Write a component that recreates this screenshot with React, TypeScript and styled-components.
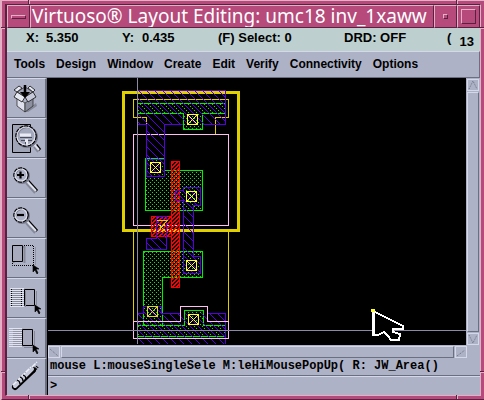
import React from "react";
import styled, { createGlobalStyle } from "styled-components";

const c = {
  pink: "#b54a7b",
  pinkLight: "#e3b0c6",
  pinkDark: "#5a2040",
  panel: "#aeb2c6",
  light: "#d4d8e8",
  dark: "#6b7080",
  status: "#bdcfce",
  purple: "#5500dd",
  green: "#00f000",
  yellow: "#e0d000",
  bright: "#ffff30",
  red: "#ff0000",
  plum: "#ffbff0",
  axis: "#8c88a6",
};

const Global = createGlobalStyle`
  * { box-sizing: border-box; }
  body { margin: 0; background: ${c.pink}; }
  button { font: inherit; color: inherit; padding: 0; margin: 0; border: 0; border-radius: 0; }
`;

const Frame = styled.div`
  position: relative;
  display: flex;
  flex-direction: column;
  min-height: 100vh;
  padding: 3px;
  background: ${c.pink};
  border-top: 1px solid ${c.pinkLight};
  border-left: 2px solid ${c.pinkLight};
  border-bottom: 2px solid ${c.pinkDark};
`;

const Notch = styled.i<{ $side: "top" | "right" | "bottom" | "left"; $end?: boolean }>`
  position: absolute;
  ${(p) => {
    const flat = p.$side === "left" || p.$side === "right";
    const inset = p.$side === "left" || p.$side === "top" ? -1 : 0;
    return `
      ${p.$side}: ${inset}px;
      ${flat ? (p.$end ? "bottom: 26px;" : "top: 26px;") : p.$end ? "right: 26px;" : "left: 26px;"}
      width: ${flat ? 4 : 2}px;
      height: ${flat ? 2 : 4}px;
      border-${flat ? "top" : "left"}: 1px solid ${c.pinkDark};
      background: ${c.pinkLight};
    `;
  }}
`;

const Inner = styled.div`
  flex: 1;
  display: flex;
  flex-direction: column;
  min-width: 0;
  border-left: 2px solid ${c.pinkDark};
  border-top: 1px solid ${c.pinkDark};
  border-right: 1px solid ${c.pinkLight};
  border-bottom: 1px solid ${c.pinkLight};
`;

const TitleBar = styled.header`
  display: flex;
  height: 23px;
  background: ${c.pink};
  color: #fff;
`;

const bevel = `
  border: 1px solid ${c.pinkLight};
  border-right-color: ${c.pinkDark};
  border-bottom-color: ${c.pinkDark};
`;

const TitleButton = styled.button`
  flex: 0 0 23px;
  display: flex;
  align-items: center;
  justify-content: center;
  background: ${c.pink};
  && { ${bevel} }
`;

const Glyph = styled.span<{ $w: number; $h: number }>`
  width: ${(p) => p.$w}px;
  height: ${(p) => p.$h}px;
  ${bevel}
`;

const Title = styled.h1`
  flex: 1;
  min-width: 0;
  margin: 0;
  padding-left: 1px;
  overflow: hidden;
  white-space: nowrap;
  font: 400 19px/21px "Noto Sans", sans-serif;
  ${bevel}
`;

const Status = styled.div`
  display: flex;
  flex: 0 0 23px;
  padding-left: 19px;
  background: ${c.status};
  font: bold 13px/20px "Liberation Sans", sans-serif;
  white-space: nowrap;
  overflow: hidden;
`;

const Field = styled.span<{ $w: number }>`
  display: flex;
  flex: 0 0 ${(p) => p.$w}px;
`;

const Label = styled.span`
  width: 20px;
`;

const Clip = styled.span`
  width: 5px;
  overflow: hidden;
`;

const Count = styled.span`
  margin-left: auto;
  padding: 4px 6px 0 0;
  line-height: 19px;
`;

const MenuBar = styled.nav`
  display: flex;
  flex: 0 0 27px;
  gap: 11px;
  padding: 0 0 2px 7px;
  background: ${c.panel};
  border-top: 1px solid ${c.light};
  border-right: 1px solid ${c.dark};
  border-bottom: 1px solid ${c.dark};
  font: bold 12px/22px "Liberation Sans", sans-serif;
`;

const MenuItem = styled.button`
  background: none;
`;

const Body = styled.div`
  flex: 1;
  display: flex;
  min-height: 0;
  background: ${c.panel};
`;

const Tools = styled.div`
  flex: 0 0 41px;
  display: flex;
  flex-direction: column;
  border-right: 1px solid #000;
`;

const Tool = styled.button`
  flex: 0 0 40px;
  background: ${c.panel};
  && {
    border-top: 1px solid ${c.light};
    border-bottom: 1px solid ${c.dark};
    border-right: 2px solid ${c.dark};
  }
  &&:last-child { flex: 1 0 36px; border-bottom: 0; }
  svg { display: block; }
`;

const Work = styled.main`
  flex: 1;
  min-width: 0;
  display: flex;
  flex-direction: column;
`;

const View = styled.div`
  flex: 1;
  display: flex;
  min-height: 0;
`;

const Canvas = styled.div`
  flex: 1;
  min-width: 0;
  overflow: hidden;
  background: #000;
  svg { display: block; }
`;

const Scroll = styled.div<{ $row?: boolean }>`
  display: flex;
  flex: 0 0 ${(p) => (p.$row ? 13 : 14)}px;
  flex-direction: ${(p) => (p.$row ? "row" : "column")};
  gap: 1px;
  padding: ${(p) => (p.$row ? "1px 13px 0 0" : "1px 1px 0 1px")};
`;

const raised = `
  border: 1px solid ${c.light};
  border-right-color: ${c.dark};
  border-bottom-color: ${c.dark};
`;

const Arrow = styled.button`
  flex: 0 0 12px;
  background: ${c.panel};
  && { border: 1px solid ${c.light}; }
  svg { display: block; }
`;

const Thumb = styled.div`
  flex: 1;
  ${raised}
`;

const Message = styled.p`
  margin: 0;
  padding-left: 2px;
  height: 18px;
  font: bold 12px/16px "Liberation Mono", monospace;
  border-bottom: 1px solid ${c.dark};
  white-space: pre;
  overflow: hidden;
`;

const Prompt = styled.label`
  display: flex;
  height: 19px;
  padding-left: 2px;
  border-top: 1px solid ${c.light};
  font: bold 12px/19px "Liberation Mono", monospace;
`;

const Command = styled.input`
  flex: 1;
  min-width: 0;
  padding: 0 4px;
  border: 0;
  outline: 0;
  background: transparent;
  font: inherit;
`;

const Pointer = ({ x, y }: { x: number; y: number }) => (
  <path d={`M${x} ${y}v7l2-2l2 4l1-1l-2-4h3z`} fill="#000" stroke="#000" strokeWidth="0.6" />
);

const Lens = ({ x, y, r, reach }: { x: number; y: number; r: number; reach: number }) => {
  const k = Math.round(r * 0.75);
  return (
    <g fill="none">
      <path d={`M${x + k + 2} ${y + k + 1}l${reach} ${reach + 1}`} stroke="#000" strokeWidth="3" />
      <path d={`M${x + k} ${y + k + 3}l${reach} ${reach + 1}`} stroke="#858999" strokeWidth="2" />
      <path d={`M${x + k} ${y + k}l${reach + 1} ${reach + 2}`} stroke="#e0e3ef" strokeWidth="2" />
      <circle cx={x + 1} cy={y + 1} r={r} stroke="#777b8c" strokeWidth="2" />
      <circle cx={x} cy={y} r={r} stroke="#000" strokeWidth="1.5" strokeDasharray="4 1" />
      <circle cx={x} cy={y} r={r - 1} stroke="#dfe2ee" strokeWidth="1.2" />
    </g>
  );
};

const rows = (from: number, to: number) => {
  const out: number[] = [];
  for (let y = from; y <= to; y += 2) out.push(y);
  return out;
};

const toolIcons: { name: string; top: number; art: React.ReactNode }[] = [
  {
    name: "Save",
    top: 79,
    art: (
      <g>
        <path d="M25 111l11-9l1 3l-9 6z" fill="#858999" />
        <path d="M17 97l8 5v9l-8-6z" fill="#dfe2ee" stroke="#333" strokeWidth="0.8" />
        <path d="M25 102l8-5v8l-8 6z" fill="#8b8fa0" stroke="#333" strokeWidth="0.8" />
        <path d="M17 91l8-5l8 5l-8 5z" fill="#9fa3b5" stroke="#333" strokeWidth="0.8" />
        <path d="M17 91l8 5l-3 5l-8-5z" fill="#e6e8f2" stroke="#222" strokeWidth="0.9" />
        <path d="M33 91l-8 5l3 5l8-5z" fill="#c5c9d9" stroke="#222" strokeWidth="0.9" />
        <path d="M17 91l-3-2l5-4l3 2zM33 91l2-2l-5-4l-2 2z" fill="#e6e8f2" stroke="#222" strokeWidth="0.9" />
        <path d="M25 84v10" stroke="#000" strokeWidth="2.5" />
        <path d="M20 91h10l-5 6z" fill="#000" />
      </g>
    ),
  },
  {
    name: "Fit",
    top: 119,
    art: (
      <g>
        <path d="M12.500 123.500h18v28h-18z" fill="#a0a4b7" stroke="#000" />
        <circle cx="26" cy="135" r="9" fill="#a4a8bb" />
        <path d="M20 134h11M26.500 138v7" stroke="#e8eaf4" strokeWidth="3" />
        <path d="M20 136.500h12M21 139.500h4M28 139.500h4M25.500 141v5" stroke="#4a4e5c" />
        <Lens x={26} y={135} r={10} reach={4} />
      </g>
    ),
  },
  {
    name: "Zoom in",
    top: 159,
    art: (
      <g>
        <Lens x={21} y={174} r={7} reach={9} />
        <path d="M17 174h7M20.500 170.500v7" stroke="#000" strokeWidth="2.200" />
      </g>
    ),
  },
  {
    name: "Zoom out",
    top: 199,
    art: (
      <g>
        <Lens x={21} y={214} r={7} reach={9} />
        <path d="M17 214h7" stroke="#000" strokeWidth="2.200" />
      </g>
    ),
  },
  {
    name: "Stretch",
    top: 239,
    art: (
      <g fill="none">
        <path d="M13.500 262v-16h11v16" stroke="#858999" strokeWidth="2" />
        <path d="M12.500 244.500h10v16h-10z" fill="#a7abbd" stroke="#000" />
        <path d="M24 244.500h9.500v20h-21v-4" stroke="#000" strokeDasharray="1 1" />
        <path d="M35.500 246v18" stroke="#9094a5" />
        <Pointer x={33} y={264} />
      </g>
    ),
  },
  {
    name: "Copy",
    top: 279,
    art: (
      <g fill="none">
        <path d={rows(287, 305).map((y) => `M10 ${y}.500h14`).join("")} stroke="#e2e5f0" />
        <path d={rows(288, 304).map((y) => `M12 ${y}.500h10`).join("")} stroke="#858999" />
        <path d="M11.500 288v17M21.500 288v17" stroke="#000" strokeDasharray="1 1" />
        <path d="M24.500 288.500h10v16h-10z" fill="#a7abbd" stroke="#000" />
        <path d="M25.500 306v-16M36.500 290v14" stroke="#858999" />
        <Pointer x={35} y={304} />
      </g>
    ),
  },
  {
    name: "Move",
    top: 319,
    art: (
      <g fill="none">
        <path d={rows(327, 345).map((y) => `M9 ${y}.500h13`).join("")} stroke="#e2e5f0" />
        <path d={rows(328, 344).map((y) => `M13 ${y}.500h9`).join("")} stroke="#9296a8" />
        <path d="M22.500 328.500h10v16h-10z" fill="#a7abbd" stroke="#000" />
        <path d="M34.500 330v14M24 346.500h10" stroke="#858999" />
        <Pointer x={33} y={344} />
      </g>
    ),
  },
  {
    name: "Delete",
    top: 359,
    art: (
      <g fill="none">
        <path d="M33 372L38 366" stroke="#000" strokeWidth="3" strokeDasharray="1 1" />
        <path d="M15 387L33 370" stroke="#000" strokeWidth="6" strokeLinecap="round" />
        <path d="M15 386L32 369" stroke="#c5c9d9" strokeWidth="4" strokeLinecap="round" />
        <path d="M13 385L31 367M32 367l5-5" stroke="#eef0f8" strokeWidth="1.500" strokeDasharray="5 1" />
        <path d="M20 377q3 1 3 4M23 375q3 1 3 4M17 380q3 1 3 4" stroke="#000" strokeWidth="1.300" />
      </g>
    ),
  },
];

const Contact = ({ x, y, color = c.bright }: { x: number; y: number; color?: string }) => (
  <path
    d={`M${x}.500 ${y}.500h10v10h-10zl10 10m0-10l-10 10`}
    fill="none"
    stroke={color}
  />
);

const Shape = ({ d, color, hatch }: { d: string; color?: string; hatch?: string }) => (
  <path d={d} fill={hatch ? `url(#${hatch})` : "none"} stroke={color ?? "none"} />
);

const Drawing = () => (
  <svg width="1600" height="266" viewBox="48 78 1600 266" shapeRendering="crispEdges" role="img" aria-label="Inverter layout">
    <defs>
      <pattern id="dots" width="4" height="4" patternUnits="userSpaceOnUse">
        <path d="M0 0h1v1h-1zM2 2h1v1h-1z" fill={c.green} />
      </pattern>
      <pattern id="metal" width="8" height="8" patternUnits="userSpaceOnUse">
        <path d="M0 0h1v1h1v1h1v1h1v1h1v1h1v1h1v1h1v1h-1v-1h-1v-1h-1v-1h-1v-1h-1v-1h-1v-1h-1v-1h-1z" fill={c.purple} />
      </pattern>
      <pattern id="poly" width="4" height="4" patternUnits="userSpaceOnUse">
        <path d="M3 0h1v1h-1zM2 0h1v2h-1zM1 1h1v2h-1zM0 2h1v2h-1zM3 3h1v1h-1z" fill={c.red} />
      </pattern>
    </defs>

    <Shape d="M133.500 232V321M228.500 232V321" color={c.yellow} />
    <Shape d="M145.500 158.500h19v12h38v40h-57z" color={c.green} hatch="dots" />
    <Shape d="M143.500 325V251.500h59v26h-40V325" color={c.green} hatch="dots" />
    <Shape d="M138 103.500H225M225 113.500H202.500V129.500H183.500V113.500H138" color={c.green} />
    <Shape d="M138 103H225V113H138zM184 113h18v16h-18z" hatch="dots" />
    <Shape d="M138 325.500h46.500v-15h19v15H225M138 336.500h87" color={c.green} />
    <Shape d="M138 325H225V337H138zM184 311h19v14h-19z" hatch="dots" />

    <Shape d="M133.500 134.500h95v91h-95z" color={c.plum} />
    <rect x="123.500" y="92.500" width="115" height="138" fill="none" stroke={c.yellow} strokeWidth="3" />
    <Shape d="M146.500 125v-8h-13v-18h95v18h-13v17" color={c.yellow} />

    <Shape d="M171.500 161.500h8v126h-8zM171 236.500h-19.500v-20H171" color={c.red} hatch="poly" />

    <Shape d="M138 90h88v35h-61v52h-19v-52h-8z" hatch="metal" />
    <Shape d="M138 90.500h87v34h-22M183 124.500h-18.500v52h-18v-52H138" color={c.purple} />
    <Shape d="M146.500 159.500h18" color={c.purple} />
    <Shape d="M183.500 200.500h-8v-10h8v-3h17v18h-7v51h7v17h-17v-73" color={c.purple} hatch="metal" />
    <Shape d="M156.500 216.500h10v33h-20v-11h10z" color={c.purple} hatch="metal" />
    <Shape d="M138 313h6v-7h18v7h64v31h-88z" hatch="metal" />
    <Shape d="M138 313.500h5.500v-7h18v7h19M207 313.500h18.500V344" color={c.purple} />
    <Shape d="M133.500 321.500h47v-15h27v15h21v17h-95z" color={c.plum} />

    <Contact x={187} y={114} />
    <Contact x={150} y={162} />
    <Contact x={186} y={191} />
    <Contact x={186} y={260} />
    <Contact x={147} y={306} color="#d8e020" />
    <Contact x={188} y={314} />
    <path d="M157 220.500h11M158 231l9-10M158 224l7 7" stroke={c.yellow} fill="none" />

    <path d="M137.500 78V344M48 330.500H1648" stroke={c.axis} />

    <path
      d="M373 311L403 326V329H393V332L400 334L399 340H391L388 336L384 332L378 335H373z"
      fill="#000"
      stroke="#fff"
      strokeWidth="2"
    />
    <path d="M373.500 312v24" stroke="#fff" strokeWidth="3" />
    <path d="M371 309h4v3h-4z" fill={c.bright} />
  </svg>
);

const ScrollArrow = ({ d, label }: { d: string; label: string }) => (
  <Arrow aria-label={label}>
    <svg width="10" height="10" viewBox="0 0 10 10" fill="none">
      <path d={d} stroke={c.dark} strokeDasharray="1 1" />
    </svg>
  </Arrow>
);

const menus = ["Tools", "Design", "Window", "Create", "Edit", "Verify", "Connectivity", "Options"];

export default function App() {
  return (
    <>
      <Global />
      <Frame>
        <Notch $side="top" />
        <Notch $side="top" $end />
        <Notch $side="bottom" />
        <Notch $side="bottom" $end />
        <Notch $side="left" />
        <Notch $side="left" $end />
        <Notch $side="right" />
        <Notch $side="right" $end />
        <Inner>
          <TitleBar>
            <TitleButton aria-label="Window menu">
              <Glyph $w={15} $h={4} />
            </TitleButton>
            <Title>Virtuoso® Layout Editing: umc18 inv_1xaww</Title>
            <TitleButton aria-label="Minimize">
              <Glyph $w={5} $h={5} />
            </TitleButton>
            <TitleButton aria-label="Maximize">
              <Glyph $w={15} $h={15} />
            </TitleButton>
          </TitleBar>
          <Status>
            <Field $w={96}>
              <Label>X:</Label>5.350
            </Field>
            <Field $w={96}>
              <Label>Y:</Label>0.435
            </Field>
            <Field $w={126}>(F) Select: 0</Field>
            <Field $w={103}>DRD: OFF</Field>
            <Clip>(</Clip>
            <Count>13</Count>
          </Status>
          <MenuBar>
            {menus.map((m) => (
              <MenuItem key={m}>{m}</MenuItem>
            ))}
          </MenuBar>
          <Body>
            <Tools>
              {toolIcons.map((t) => (
                <Tool key={t.name} aria-label={t.name}>
                  <svg width="38" height="36" viewBox={`7 ${t.top} 38 36`}>
                    {t.art}
                  </svg>
                </Tool>
              ))}
            </Tools>
            <Work>
              <View>
                <Canvas>
                  <Drawing />
                </Canvas>
                <Scroll>
                  <ScrollArrow label="Scroll up" d="M1 9L5 1L9 9" />
                  <Thumb />
                  <ScrollArrow label="Scroll down" d="M1 1L5 9L9 1" />
                </Scroll>
              </View>
              <Scroll $row>
                <ScrollArrow label="Scroll left" d="M1 2L9 9" />
                <Thumb />
                <ScrollArrow label="Scroll right" d="M1 9L9 3" />
              </Scroll>
              <Message>mouse L:mouseSingleSele M:leHiMousePopUp( R: JW_Area()</Message>
              <Prompt>
                &gt;
                <Command aria-label="Command" />
              </Prompt>
            </Work>
          </Body>
        </Inner>
      </Frame>
    </>
  );
}
